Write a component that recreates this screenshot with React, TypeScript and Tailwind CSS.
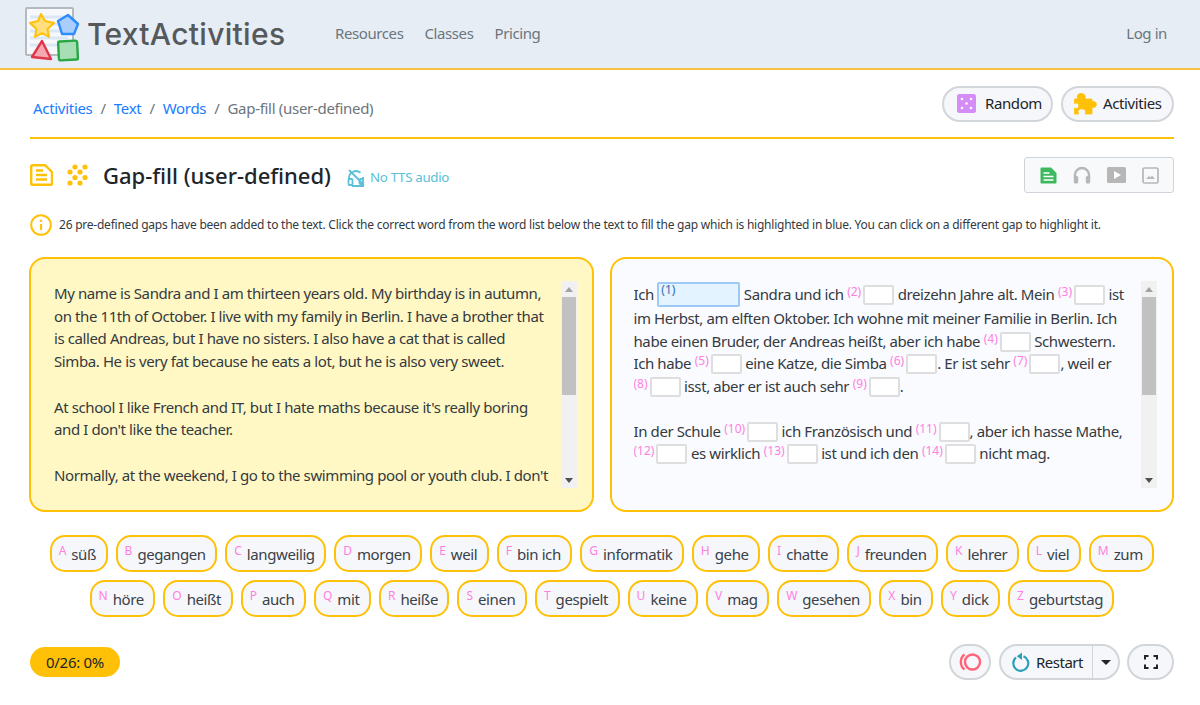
const Logo = () => (
  <svg width="58" height="58" viewBox="0 0 58 58" className="shrink-0">
    <rect x="2" y="3" width="47" height="47" fill="#f6f8fb" stroke="#b4bac1" strokeWidth="2" rx="1" />
    <path d="M6 12h38M6 19h38M6 26h38M6 33h38M6 40h38" stroke="#dbe7f5" strokeWidth="3" />
    <polygon points="17,9 21,16 30,18 23.500,24 25,32 18,28 11,32 12.500,24 6,18 14,16" fill="#ffdf7e" stroke="#ffc107" strokeWidth="2" strokeLinejoin="round" />
    <polygon points="44,10 54,19 50,29 38,29 34,16" fill="#a9cdfd" stroke="#2f8cfb" strokeWidth="2.400" strokeLinejoin="round" />
    <polygon points="18,36 27,54 8,52" fill="#f5a8b0" stroke="#e0364c" strokeWidth="2.400" strokeLinejoin="round" />
    <rect x="34.500" y="36" width="19" height="19" rx="1.500" transform="rotate(-3 44 45)" fill="#a7deb4" stroke="#28a745" strokeWidth="2.400" />
  </svg>
);

const Dice = () => (
  <svg width="19" height="19" viewBox="0 0 19 19">
    <rect width="19" height="19" rx="2.500" fill="#d58cf7" />
    <circle cx="5" cy="5" r="1.300" fill="#fff" />
    <circle cx="14" cy="5" r="1.300" fill="#fff" />
    <circle cx="9.500" cy="9.500" r="1.300" fill="#fff" />
    <circle cx="5" cy="14" r="1.300" fill="#fff" />
    <circle cx="14" cy="14" r="1.300" fill="#fff" />
  </svg>
);

const Puzzle = () => (
  <svg width="23" height="22" viewBox="0 0 23 22" fill="#ffc107" stroke="#ffc107" strokeWidth="0.800" strokeLinejoin="round">
    <path d="M0.500 6H3.800C3.400 5 3.200 4.300 3.200 3.600C3.200 1.600 5 0.500 7.200 0.500S11.200 1.600 11.200 3.600C11.200 4.300 11 5 10.600 6H18V8.800C18.600 8.500 19 8.400 19.600 8.400C21.200 8.400 22.400 9.800 22.400 11.500S21.200 14.600 19.600 14.600C19 14.600 18.600 14.500 18 14.200V21H11.200C11.500 20 11.600 19.400 11.600 18.800C11.600 17 9.700 15.800 7.800 15.800S4 17 4 18.800C4 19.400 4.200 20 4.600 21H0.500V15C1.200 15.400 1.800 15.500 2.400 15.500C3.800 15.500 4.800 14.300 4.800 12.800S3.800 10 2.400 10C1.800 10 1.200 10.200 0.500 10.600Z" />
  </svg>
);

const DocIcon = () => (
  <svg width="23" height="22" viewBox="0 0 23 22" fill="none" stroke="#ffc107" strokeWidth="2.400" strokeLinejoin="round">
    <path d="M1.200 2.500a1.300 1.300 0 0 1 1.300-1.300h12.500l7 6.800v11.500a1.300 1.300 0 0 1-1.300 1.300h-18.200a1.300 1.300 0 0 1-1.300-1.300z" />
    <path d="M6 6.500h7M6 11h11M6 15.500h11" />
  </svg>
);

const DotsIcon = () => (
  <svg width="22" height="22" viewBox="0 0 22 22" fill="#ffc107">
    {[[9, 3], [19, 3], [4, 8], [14, 8], [9, 13.500], [19, 13.500], [4, 19], [14, 19]].map(([x, y], i) => (
      <circle key={i} cx={x} cy={y} r="2.600" />
    ))}
  </svg>
);

const NoAudio = () => (
  <svg width="18" height="18" viewBox="0 0 18 18" fill="none" stroke="#5bc0d8" strokeWidth="1.800">
    <path d="M2 11V9a7 7 0 0 1 11.500-5.300M16 8v3" />
    <rect x="1.500" y="10" width="4" height="6" rx="1" />
    <rect x="12.500" y="10" width="3.500" height="5" rx="1" />
    <path d="M2 1l15 15M5 17h12" />
  </svg>
);

const GreenDoc = () => (
  <svg width="17" height="17" viewBox="0 0 17 17">
    <path d="M1.500 0.500h9.500l5.500 5.500v9.500a1 1 0 0 1-1 1H1.500a1 1 0 0 1-1-1V1.500a1 1 0 0 1 1-1z" fill="#3cb95f" />
    <path d="M3.500 6h6M3.500 9.500h10M3.500 13h10" stroke="#fff" strokeWidth="1.600" />
  </svg>
);

const Headphones = () => (
  <svg width="18" height="18" viewBox="0 0 18 18" fill="none">
    <path d="M2 12V9a7 7 0 0 1 14 0v3" stroke="#b7b7b7" strokeWidth="2.400" />
    <rect x="0.800" y="10" width="4.400" height="7.500" rx="1.500" fill="#b7b7b7" />
    <rect x="12.800" y="10" width="4.400" height="7.500" rx="1.500" fill="#b7b7b7" />
  </svg>
);

const PlayBox = () => (
  <svg width="19" height="16" viewBox="0 0 19 16">
    <rect width="19" height="16" rx="1.500" fill="#b7b7b7" />
    <polygon points="7,4 14,8 7,12" fill="#fff" />
  </svg>
);

const PicBox = () => (
  <svg width="17" height="17" viewBox="0 0 17 17" fill="none">
    <rect x="1" y="1" width="15" height="15" rx="1.500" stroke="#b7b7b7" strokeWidth="1.700" />
    <polygon points="4,12 7,9 8.500,10.500 10,8.500 13,12" fill="#b7b7b7" />
  </svg>
);

const InfoIcon = () => (
  <svg width="22" height="22" viewBox="0 0 22 22" fill="none" stroke="#ffc107" strokeWidth="2">
    <circle cx="11" cy="11" r="9.800" />
    <path d="M11 10v6" strokeWidth="2.200" />
    <circle cx="11" cy="6.800" r="1.200" fill="#ffc107" stroke="none" />
  </svg>
);

const Rings = () => (
  <svg width="24" height="20" viewBox="0 0 24 20" fill="none" stroke="#ff6478" strokeWidth="2.400">
    <circle cx="14.500" cy="10" r="7.500" />
    <path d="M6.500 2.500a9.500 9.500 0 0 0 0 15" />
  </svg>
);

const RestartIcon = () => (
  <svg width="18" height="20" viewBox="0 0 18 20" fill="none">
    <path d="M11.500 4.300A7.500 7.500 0 1 1 4 5.500" stroke="#2a9fb8" strokeWidth="2.200" />
    <polygon points="10,0.500 10,8 4.800,4.200" fill="#2a9fb8" />
  </svg>
);

const FullIcon = () => (
  <svg width="14" height="14" viewBox="0 0 14 14" fill="none" stroke="#212529" strokeWidth="2">
    <path d="M1 4.500V1h3.500M9.500 1H13v3.500M13 9.500V13H9.500M4.500 13H1V9.500" />
  </svg>
);

const Scrollbar = () => (
  <div className="w-[16px] shrink-0 bg-[#f1f1f1] flex flex-col items-center h-full">
    <div className="h-[16px] flex items-center justify-center">
      <div className="border-x-[4px] border-x-transparent border-b-[5px] border-b-[#a3a3a3]" />
    </div>
    <div className="w-[14px] h-[98px] bg-[#c1c1c1]" />
    <div className="flex-1" />
    <div className="h-[16px] flex items-center justify-center">
      <div className="border-x-[4px] border-x-transparent border-t-[5px] border-t-[#505050]" />
    </div>
  </div>
);

const Gap = ({ n }: { n: number }) => (
  <>
    <sup className="-top-[4px] text-[12px] tracking-normal text-[#ff80e0] mr-[2px]">({n})</sup>
    <span className="inline-block align-[-5px] w-[31px] h-[20px] border-2 border-[#dedede] bg-white rounded-[2px]" />
  </>
);

const ActiveGap = () => (
  <span className="relative inline-block align-[-7px] w-[83px] h-[25px] border-2 border-[#9cc9f5] bg-[#e3f3ff] rounded-[2px]">
    <span className="absolute left-[2px] -top-[1px] text-[12px] leading-[14px] tracking-normal text-[#2e6ea8]">(1)</span>
  </span>
);

const topWords = [
  ['A', 'süß'], ['B', 'gegangen'], ['C', 'langweilig'], ['D', 'morgen'], ['E', 'weil'], ['F', 'bin ich'], ['G', 'informatik'],
  ['H', 'gehe'], ['I', 'chatte'], ['J', 'freunden'], ['K', 'lehrer'], ['L', 'viel'], ['M', 'zum'],
];
const bottomWords = [
  ['N', 'höre'], ['O', 'heißt'], ['P', 'auch'], ['Q', 'mit'], ['R', 'heiße'], ['S', 'einen'], ['T', 'gespielt'], ['U', 'keine'],
  ['V', 'mag'], ['W', 'gesehen'], ['X', 'bin'], ['Y', 'dick'], ['Z', 'geburtstag'],
];

const WordRow = ({ words }: { words: string[][] }) => (
  <div className="flex justify-center gap-x-[8px]">
    {words.map(([letter, word]) => (
      <div key={letter} className="h-[37px] border-2 border-[#ffc107] rounded-[15px] bg-[#f5f7fa] pl-[7px] pr-[9.500px] pt-[1px] flex items-center text-[15px] text-[#3a4149]">
        <span className="text-[12px] tracking-normal text-[#ff80e0] mr-[5px] -mt-[6px]">{letter}</span>
        {word}
      </div>
    ))}
  </div>
);

const pillBtn = 'h-[36px] border-2 border-[#d3d6d9] rounded-[18px] bg-[#f5f7fa] flex items-center';

export default function App() {
  return (
    <div className="w-[1200px] h-[705px] overflow-hidden bg-white text-[#212529] text-[15px] tracking-[-0.4px] font-['Noto_Sans',sans-serif]">
      <header className="h-[70px] bg-[#e6edf5] border-b-2 border-[#f5c242] flex items-center pl-[24px] pr-[33px]">
        <Logo />
        <span className="ml-[5px] w-[248px] text-[30px] font-medium text-[#55595c] tracking-[0.3px] font-['Inter',sans-serif]">TextActivities</span>
        <nav className="flex gap-[21px] text-[#6c757d] -mt-[1px]">
          <span>Resources</span>
          <span>Classes</span>
          <span>Pricing</span>
        </nav>
        <span className="ml-auto text-[#6c757d] -mt-[1px]">Log in</span>
      </header>

      <main className="pl-[30px] pr-[26px]">
        <div className="h-[69px] border-b-2 border-[#ffc107] flex items-center justify-between pl-[3px]">
          <div className="flex gap-[8px] text-[#6c757d] tracking-[-0.3px] mt-[9px]">
            <span className="text-[#1a7cff]">Activities</span><span>/</span>
            <span className="text-[#1a7cff]">Text</span><span>/</span>
            <span className="text-[#1a7cff]">Words</span><span>/</span>
            <span>Gap-fill (user-defined)</span>
          </div>
          <div className="flex gap-[8px]">
            <div className={`${pillBtn} w-[111px] pl-[13px] gap-[9px]`}><Dice />Random</div>
            <div className={`${pillBtn} w-[113px] pl-[11px] gap-[6px]`}><Puzzle />Activities</div>
          </div>
        </div>

        <div className="mt-[17px] h-[38px] flex items-center">
          <DocIcon />
          <span className="ml-[13px]"><DotsIcon /></span>
          <h1 className="ml-[15px] mt-[1px] text-[22px] font-medium tracking-normal text-[#212529]">Gap-fill (user-defined)</h1>
          <span className="ml-[16px] flex items-center gap-[5px] text-[13.300px] tracking-[-0.3px] text-[#5bc0d8] mt-[5px]"><NoAudio />No TTS audio</span>
          <div className="ml-auto w-[150px] h-[36px] border border-[#ced4da] rounded-[3px] bg-[#f8f9fa] flex items-center justify-center gap-[16px]">
            <GreenDoc />
            <Headphones />
            <PlayBox />
            <PicBox />
          </div>
        </div>

        <div className="mt-[20px] h-[22px] flex items-center text-[12px] tracking-[-0.23px] text-[#343a40]">
          <InfoIcon />
          <span className="ml-[7px]">26 pre-defined gaps have been added to the text. Click the correct word from the word list below the text to fill the gap which is highlighted in blue. You can click on a different gap to highlight it.</span>
        </div>

        <div className="mt-[21px] grid grid-cols-2 gap-[16px] -ml-[1px]">
          <div className="h-[255px] border-2 border-[#ffc107] rounded-[16px] bg-[#fff8c4] pl-[23px] pr-[15px] py-[22px] flex gap-[8px]">
            <div className="flex-1 overflow-hidden pt-[1px] text-[#343a40] leading-[22.700px]">
              <p>My name is Sandra and I am thirteen years old. My birthday is in autumn, on the 11th of October. I live with my family in Berlin. I have a brother that is called Andreas, but I have no sisters. I also have a cat that is called Simba. He is very fat because he eats a lot, but he is also very sweet.</p>
              <p className="mt-[22.700px]">At school I like French and IT, but I hate maths because it's really boring and I don't like the teacher.</p>
              <p className="mt-[22.700px]">Normally, at the weekend, I go to the swimming pool or youth club. I don't</p>
            </div>
            <Scrollbar />
          </div>

          <div className="h-[255px] border-2 border-[#ffc107] rounded-[16px] bg-[#fafbff] pl-[22px] pr-[15px] py-[22px] flex gap-[8px]">
            <div className="flex-1 overflow-hidden pt-[1px] text-[#343a40] leading-[22.700px]">
              <p>
                Ich <ActiveGap /> Sandra und ich <Gap n={2} /> dreizehn Jahre alt. Mein <Gap n={3} /> ist im Herbst, am elften Oktober. Ich wohne mit meiner Familie in Berlin. Ich habe einen Bruder, der Andreas heißt, aber ich habe <Gap n={4} /> Schwestern. Ich habe <Gap n={5} /> eine Katze, die Simba <Gap n={6} />. Er ist sehr <Gap n={7} />, weil er<br /><Gap n={8} /> isst, aber er ist auch sehr <Gap n={9} />.
              </p>
              <p className="mt-[21.700px]">
                In der Schule <Gap n={10} /> ich Französisch und <Gap n={11} />, aber ich hasse Mathe, <Gap n={12} /> es wirklich <Gap n={13} /> ist und ich den <Gap n={14} /> nicht mag.
              </p>
            </div>
            <Scrollbar />
          </div>
        </div>

        <div className="mt-[23px] flex flex-col gap-[8px]">
          <WordRow words={topWords} />
          <WordRow words={bottomWords} />
        </div>

        <div className="mt-[27px] flex items-center justify-between">
          <div className="h-[30px] w-[90px] rounded-full bg-[#ffc107] flex items-center justify-center text-[15px] tracking-[-0.3px]">0/26: 0%</div>
          <div className="flex">
            <div className={`${pillBtn} w-[42px] justify-center mr-[8px]`}><Rings /></div>
            <div className={`${pillBtn} w-[121px] pl-[11px] mr-[7px]`}>
              <RestartIcon />
              <span className="ml-[6px] tracking-[-0.5px]">Restart</span>
              <div className="ml-auto h-full border-l border-[#d3d6d9] w-[26px] flex items-center justify-center">
                <div className="border-x-[5px] border-x-transparent border-t-[5px] border-t-[#212529]" />
              </div>
            </div>
            <div className={`${pillBtn} w-[47px] justify-center`}><FullIcon /></div>
          </div>
        </div>
      </main>
    </div>
  );
}
